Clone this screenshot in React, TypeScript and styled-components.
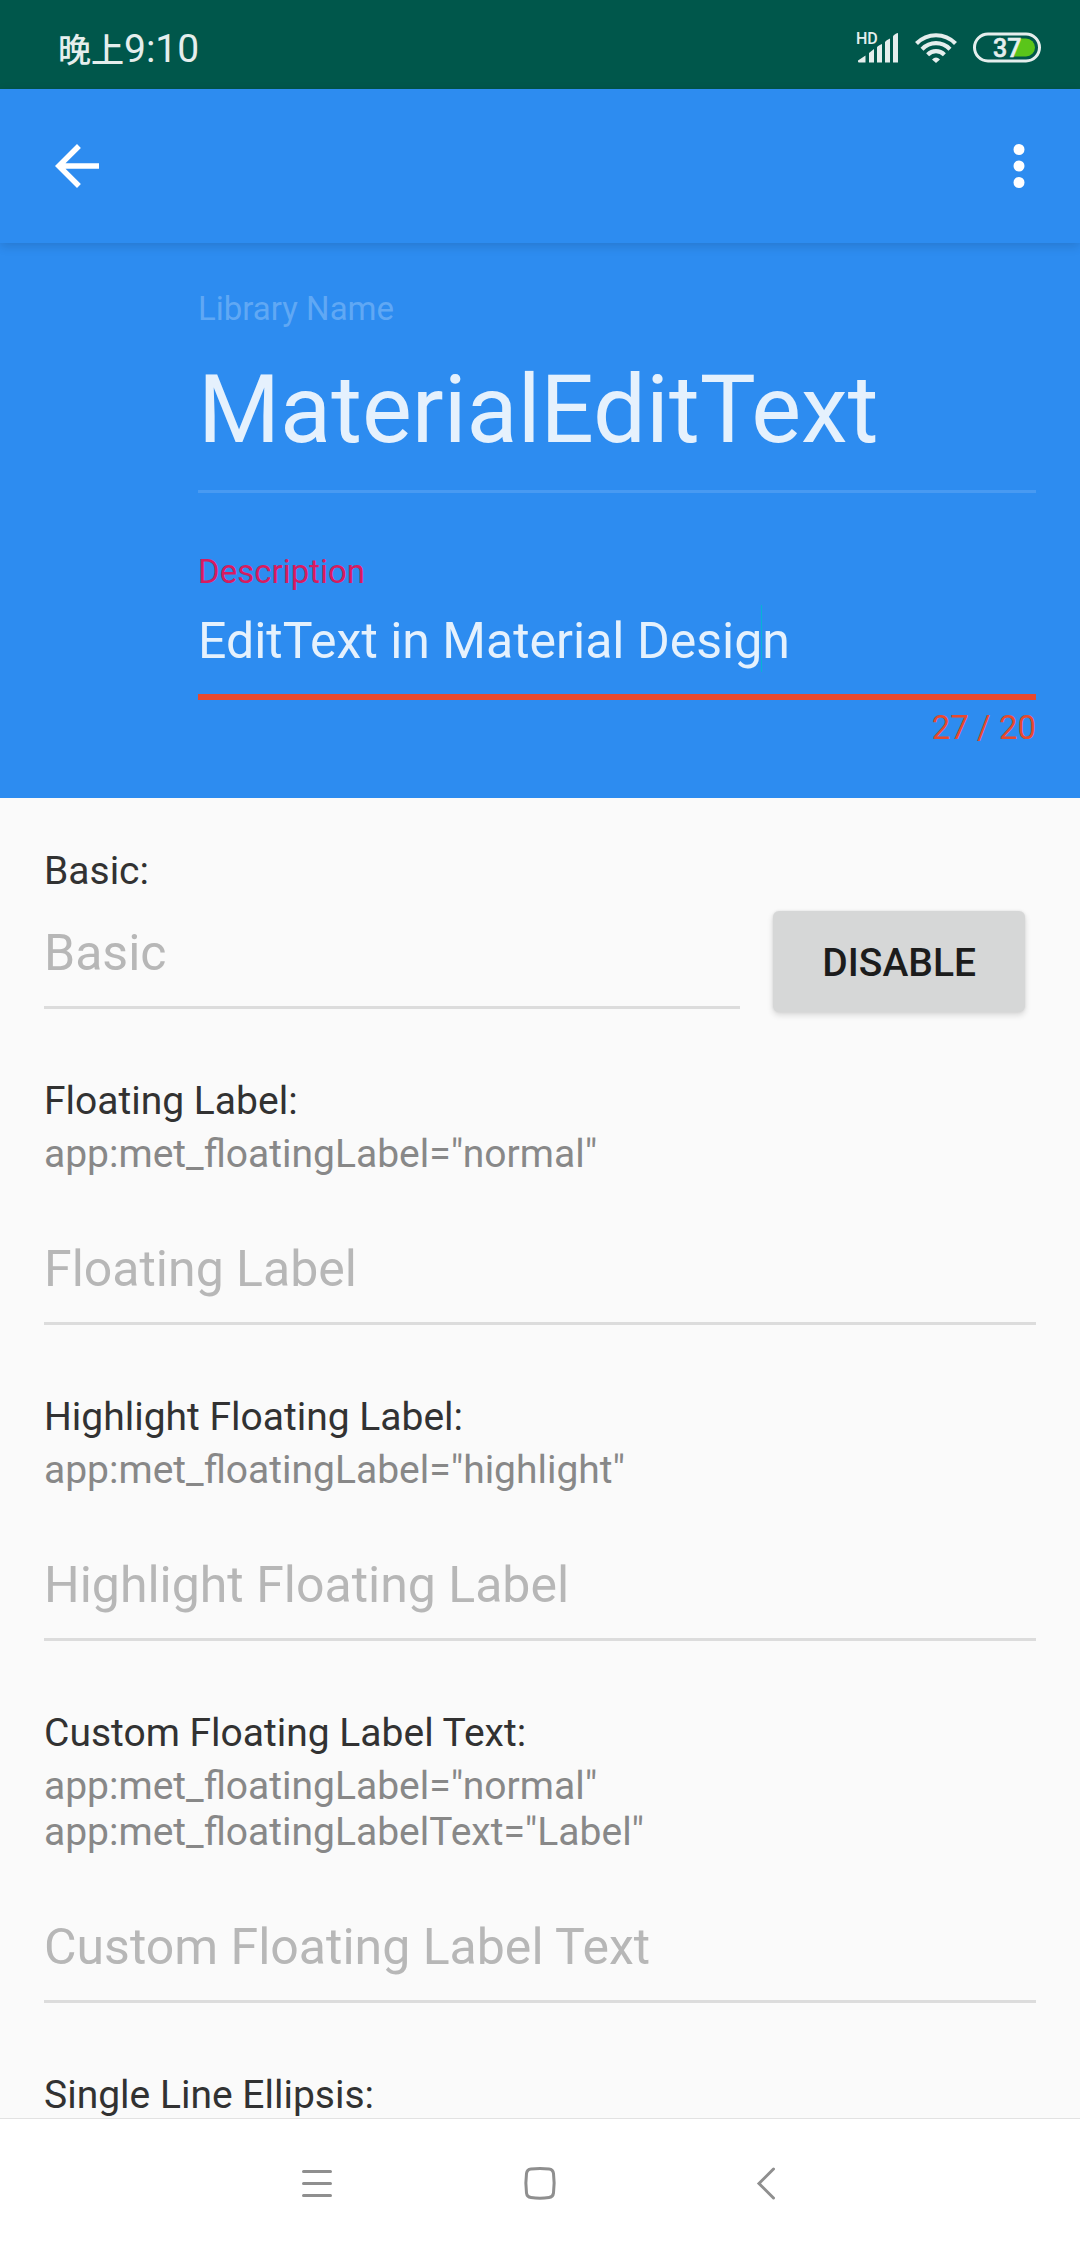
import React from "react";
import styled, { createGlobalStyle } from "styled-components";

const GlobalStyle = createGlobalStyle`
  *, *::before, *::after { box-sizing: border-box; }
  body {
    margin: 0;
    background: #fafafa;
    font-family: Roboto, "Noto Sans CJK SC", sans-serif;
  }
  button, input { font-family: inherit; margin: 0; }
`;

const Screen = styled.div`
  display: flex;
  flex-direction: column;
  min-height: 100vh;
`;

/* ---------- status bar ---------- */

const StatusBar = styled.div`
  display: flex;
  align-items: center;
  justify-content: space-between;
  height: 89px;
  padding: 6px 39px 0 58px;
  background: #00574b;
  color: #e5eeed;
`;

const Clock = styled.time`
  display: flex;
  align-items: baseline;
  padding-top: 2px;
  font-size: 39px;
  line-height: 46px;
`;

const DayPart = styled.span`
  font-family: "Noto Sans CJK SC", sans-serif;
  font-size: 33px;
  font-weight: 500;
  line-height: 46px;
`;

const StatusIcons = styled.div`
  display: flex;
  align-items: center;
  gap: 16px;

  svg { display: block; overflow: visible; }
`;

/* ---------- app bar ---------- */

const AppBar = styled.header`
  position: relative;
  z-index: 1;
  display: flex;
  align-items: center;
  justify-content: space-between;
  height: 154px;
  padding: 0 28px 0 44px;
  background: #2d8cf0;
  box-shadow: 0 3px 10px rgba(0, 0, 0, 0.14);
`;

const IconButton = styled.button`
  display: flex;
  padding: 0;
  border: 0;
  background: none;
  color: #fff;

  svg { display: block; width: 66px; height: 66px; fill: currentColor; }
`;

/* ---------- header form ---------- */

const Hero = styled.section`
  display: flex;
  flex-direction: column;
  gap: 59px;
  padding: 46px 44px 51px 198px;
  background: #2d8cf0;
`;

const HeroField = styled.div`
  display: flex;
  flex-direction: column;
`;

const FloatingLabel = styled.label<{ $color: string; $gap: number }>`
  margin-bottom: ${(p) => p.$gap}px;
  color: ${(p) => p.$color};
  font-size: 33px;
  line-height: 39px;
`;

const InputWrap = styled.div`
  position: relative;
  display: flex;
`;

const Caret = styled.span`
  position: absolute;
  top: -7px;
  left: 563px;
  width: 1px;
  height: 67px;
  background: #05b4d6;
`;

const HeroInput = styled.input<{ $large?: boolean; $error?: boolean }>`
  flex: 1;
  min-width: 0;
  height: ${(p) => (p.$large ? 138 : 88)}px;
  padding: 0 0 ${(p) => (p.$large ? 25 : 24)}px;
  border: 0;
  border-bottom: ${(p) =>
    p.$error ? "6px solid #e7492e" : "3px solid rgba(255, 255, 255, 0.13)"};
  border-radius: 0;
  outline: 0;
  background: none;
  color: #e5f1fd;
  font-size: ${(p) => (p.$large ? 94 : 50)}px;
  line-height: ${(p) => (p.$large ? 110 : 58)}px;
`;

const Counter = styled.output`
  margin-top: 8px;
  color: #e7492e;
  font-size: 33px;
  line-height: 39px;
  text-align: right;
`;

/* ---------- sample list ---------- */

const Samples = styled.main`
  flex: 1;
  display: flex;
  flex-direction: column;
  gap: 69px;
  padding: 50px 44px 0;
  background: #fafafa;
`;

const Sample = styled.section`
  display: flex;
  flex-direction: column;
`;

const SampleTitle = styled.label`
  color: #323232;
  font-size: 39px;
  line-height: 46px;
`;

const Attributes = styled.div`
  margin: 7px 0 63px;
  color: #888;
  font-size: 39px;
  line-height: 46px;
`;

const TextInput = styled.input`
  flex: 1 0 auto;
  width: 100%;
  min-width: 0;
  height: 85px;
  padding: 0 0 24px;
  border: 0;
  border-bottom: 3px solid #dcdcdc;
  border-radius: 0;
  outline: 0;
  background: none;
  color: #323232;
  font-size: 50px;
  line-height: 58px;

  &::placeholder { color: #b7b7b7; opacity: 1; }
`;

const BasicRow = styled.div`
  display: flex;
  align-items: flex-start;
  gap: 33px;
  margin: 17px 11px -3px 0;
`;

const BasicField = styled.div`
  flex: 1;
  display: flex;
  padding-top: 13px;
`;

const RaisedButton = styled.button`
  padding: 29px 49px 26px;
  border: 0;
  border-radius: 6px;
  background: #d6d7d7;
  box-shadow: 0 3px 6px rgba(0, 0, 0, 0.14), 0 0 3px rgba(0, 0, 0, 0.08);
  color: #1c1c1c;
  font-size: 39px;
  font-weight: 500;
  line-height: 46px;
`;

/* ---------- system navigation ---------- */

const NavBar = styled.nav`
  display: flex;
  align-items: center;
  justify-content: center;
  gap: 157px;
  height: 130px;
  border-top: 1px solid #e2e2e2;
  background: #fff;
`;

const NavButton = styled(IconButton)`
  color: #8f8f8f;

  svg { fill: none; stroke: currentColor; stroke-width: 3; stroke-linecap: round; }
`;

const SignalIcon = () => (
  <svg width="42" height="31" viewBox="0 0 42 31" fill="#e5eeed">
    <text x="-1" y="12" fontSize="16" fontWeight="500" fontFamily="Roboto, sans-serif">HD</text>
    <path d="M1 28.5 8.500 23.500V30.500H2Q1 30.500 1 29.500ZM12 21 17 17V30.500H12ZM20 15.500Q20 14 25 12V30.500H20ZM28 10Q29 8 33 6.500V30.500H28ZM36 4.500Q37 2 41 1V30.500H36Z" />
  </svg>
);

const WifiIcon = () => (
  <svg width="42" height="31" viewBox="0 0 42 31" fill="none" stroke="#e5eeed" strokeWidth="4.200">
    <path d="M1.500 11.500C12.500.5 29.500.5 40.500 11.500" />
    <path d="M7 17.200C15 9.200 27 9.200 35 17.200" />
    <path d="M12.600 22.800C17.500 18 24.500 18 29.400 22.800" />
    <path d="M17 27.500Q21 23.500 25 27.500L21 31Z" fill="#e5eeed" stroke="none" />
  </svg>
);

const BatteryIcon = () => (
  <svg width="68" height="31" viewBox="0 0 68 31">
    <rect x="1.500" y="2" width="65" height="27" rx="13.500" fill="none" stroke="#e5eeed" strokeWidth="3" />
    <path d="M46 6.500H53a9 9 0 0 1 0 18H41Z" fill="#5ac51a" />
    <text x="20" y="24.500" fontSize="25" fontWeight="500" fill="#e5eeed" stroke="#e5eeed" strokeWidth="0.5" fontFamily="Roboto, sans-serif">37</text>
  </svg>
);

const samples = [
  { id: "floating", title: "Floating Label", attrs: ['app:met_floatingLabel="normal"'] },
  { id: "highlight", title: "Highlight Floating Label", attrs: ['app:met_floatingLabel="highlight"'] },
  {
    id: "custom",
    title: "Custom Floating Label Text",
    attrs: ['app:met_floatingLabel="normal"', 'app:met_floatingLabelText="Label"'],
  },
];

export default function App() {
  return (
    <Screen>
      <GlobalStyle />
      <StatusBar>
        <Clock>
          <DayPart>晚上</DayPart>
          <span>9:10</span>
        </Clock>
        <StatusIcons>
          <SignalIcon />
          <WifiIcon />
          <BatteryIcon />
        </StatusIcons>
      </StatusBar>

      <AppBar>
        <IconButton type="button" aria-label="Back">
          <svg viewBox="0 0 24 24">
            <path d="M20 11H7.830l5.590-5.590L12 4l-8 8 8 8 1.410-1.410L7.830 13H20v-2z" />
          </svg>
        </IconButton>
        <IconButton type="button" aria-label="More options">
          <svg viewBox="0 0 24 24">
            <path d="M12 8a2 2 0 1 0 0-4 2 2 0 0 0 0 4zm0 2a2 2 0 1 0 0 4 2 2 0 0 0 0-4zm0 6a2 2 0 1 0 0 4 2 2 0 0 0 0-4z" />
          </svg>
        </IconButton>
      </AppBar>

      <Hero>
        <HeroField>
          <FloatingLabel htmlFor="library" $color="#60a8f4" $gap={27}>Library Name</FloatingLabel>
          <InputWrap>
            <HeroInput id="library" $large defaultValue="MaterialEditText" />
          </InputWrap>
        </HeroField>
        <HeroField>
          <FloatingLabel htmlFor="description" $color="#d81b60" $gap={21}>Description</FloatingLabel>
          <InputWrap>
            <HeroInput id="description" $error defaultValue="EditText in Material Design" />
            <Caret />
          </InputWrap>
          <Counter htmlFor="description">27 / 20</Counter>
        </HeroField>
      </Hero>

      <Samples>
        <Sample>
          <SampleTitle htmlFor="basic">Basic:</SampleTitle>
          <BasicRow>
            <BasicField>
              <TextInput id="basic" placeholder="Basic" />
            </BasicField>
            <RaisedButton type="button">DISABLE</RaisedButton>
          </BasicRow>
        </Sample>
        {samples.map((s) => (
          <Sample key={s.id}>
            <SampleTitle htmlFor={s.id}>{s.title}:</SampleTitle>
            <Attributes>
              {s.attrs.map((a) => (
                <div key={a}>{a}</div>
              ))}
            </Attributes>
            <TextInput id={s.id} placeholder={s.title} />
          </Sample>
        ))}
        <Sample>
          <SampleTitle as="div">Single Line Ellipsis:</SampleTitle>
        </Sample>
      </Samples>

      <NavBar>
        <NavButton type="button" aria-label="Menu">
          <svg viewBox="0 0 66 66">
            <path d="M19.500 20.500H46.500M19.500 32.500H46.500M19.500 44.500H46.500" />
          </svg>
        </NavButton>
        <NavButton type="button" aria-label="Home">
          <svg viewBox="0 0 66 66">
            <path d="M24 18Q33 16.800 42 18Q46 18.500 46.500 22.500Q47.800 32 46.500 42Q46 46 42 46.500Q33 47.800 24 46.500Q20 46 19.500 42Q18.200 32 19.500 22.500Q20 18.500 24 18Z" />
          </svg>
        </NavButton>
        <NavButton type="button" aria-label="Back">
          <svg viewBox="0 0 66 66">
            <path d="M43.500 18L29 32.500L43.500 47" />
          </svg>
        </NavButton>
      </NavBar>
    </Screen>
  );
}
